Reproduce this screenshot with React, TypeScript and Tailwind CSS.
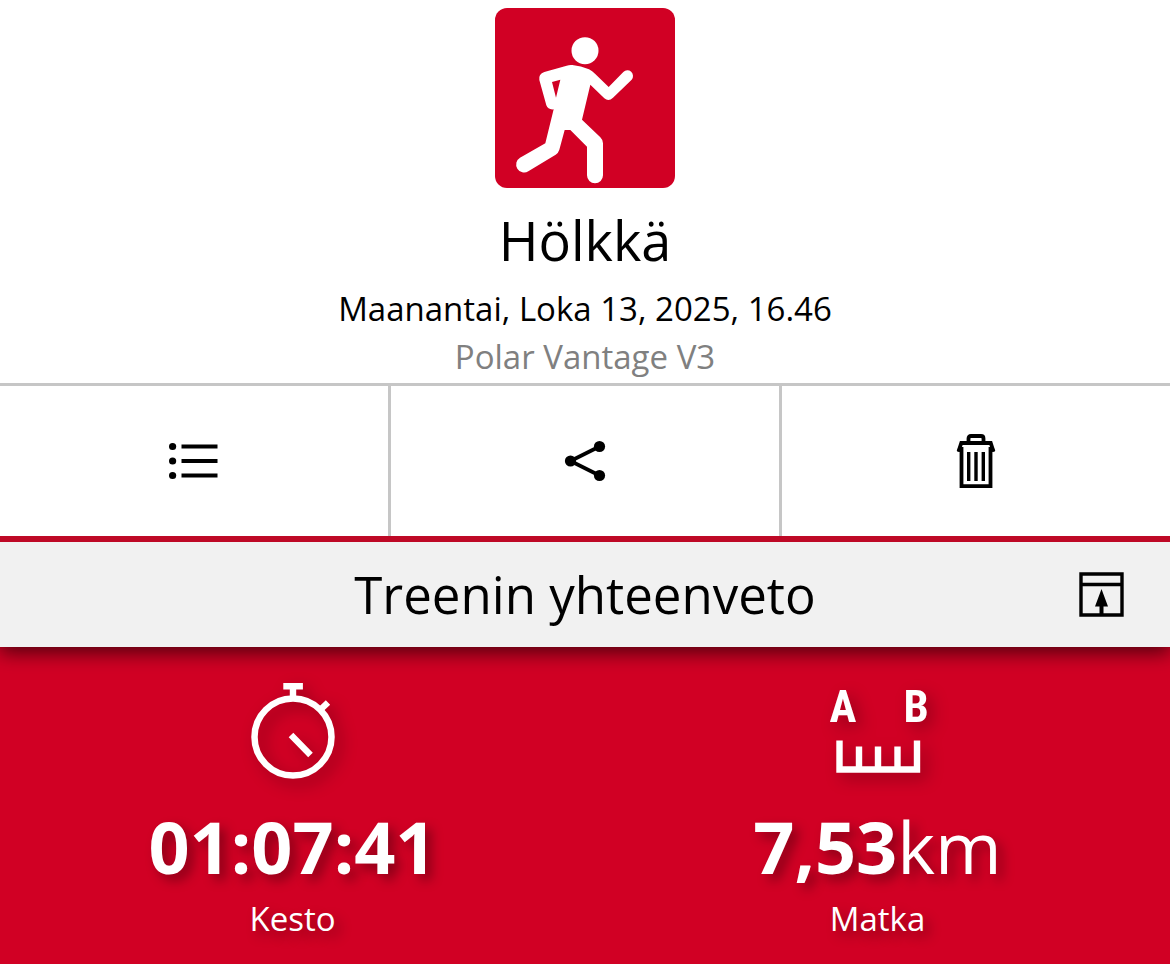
import React from 'react';

const RunnerLogo = () => (
  <svg viewBox="30 24 540 540" className="w-[180px] h-[180px]" role="img" aria-label="Hölkkä">
    <rect x="30" y="24" width="540" height="540" rx="36" fill="#d10024" />
    <circle cx="300" cy="152" r="40.500" fill="#fff" />
    <path
      fill="#fff"
      fillRule="evenodd"
      d="M262 195 Q288 197 312 208 Q322 213 330 221 L371 261 L415 216 A17 17 0 0 1 440 239 L384 293 Q371 306 358 295 L316 254 L291 359 L346 412 Q354 420 354 430 V526 A24 24 0 0 1 306 526 V440 L256 390 H239 L223 449 Q220 459 212 464 L130 514 A24 24 0 0 1 105 473 L181 430 L206 328 Q189 330 184 316 L163 240 Q160 222 178 216 L245 197 Q253 194 262 195 Z M201 246 L226 239 L213 293 Z"
    />
  </svg>
);

const ListIcon = () => (
  <svg viewBox="0 0 50 38" className="w-[50px] h-[38px]" aria-hidden="true">
    {[4.5, 19, 33.5].map((y) => (
      <g key={y}>
        <circle cx="3.600" cy={y} r="3.600" />
        <path d={`M12.500 ${y} H48.500`} stroke="#000" strokeWidth="3.800" />
      </g>
    ))}
  </svg>
);

const ShareIcon = () => (
  <svg viewBox="0 0 42 42" className="w-[42px] h-[42px]" aria-hidden="true">
    <path d="M35.500 6.500 L6.500 21 L35.500 35.500" fill="none" stroke="#000" strokeWidth="3.800" />
    <circle cx="6.500" cy="21" r="5.600" />
    <circle cx="35.500" cy="6.500" r="5.600" />
    <circle cx="35.500" cy="35.500" r="5.600" />
  </svg>
);

const TrashIcon = () => (
  <svg viewBox="0 0 40 56" className="w-10 h-14" fill="none" stroke="#000" strokeWidth="3.800" aria-hidden="true">
    <path d="M12.500 9 V5.500 Q12.500 3 15 3 H25 Q27.500 3 27.500 5.500 V9" />
    <path d="M1.500 17.200 H5.500 M34.500 17.200 H38.500" strokeWidth="3" />
    <path d="M2.500 18.500 L5.300 10 H34.700 L37.500 18.500" />
    <path d="M5.500 14 V53.200 H34.500 V14" />
    <path d="M12.700 19 V48 M20 19 V48 M27.300 19 V48" strokeWidth="3.400" />
  </svg>
);

const CollapseIcon = () => (
  <svg viewBox="0 0 45 45" className="w-[45px] h-[45px]" aria-hidden="true">
    <path d="M2 2 H43 V43 H2 Z M2 12.500 H43" fill="none" stroke="#000" strokeWidth="3.400" />
    <path d="M22.500 17 L29 34.500 H24.500 V43 H20.500 V34.500 H16 Z" />
  </svg>
);

const StopwatchIcon = () => (
  <svg
    viewBox="0 0 96 96"
    className="w-24 h-24 overflow-visible drop-shadow-[6px_6px_8px_rgba(0,0,0,0.3)]"
    fill="none"
    stroke="#fff"
    aria-hidden="true"
  >
    <circle cx="48" cy="54" r="38.500" strokeWidth="6.500" />
    <path d="M38.300 3.200 H57.900 M48 3 V15" strokeWidth="6.400" />
    <path d="M75 27 L83 19.500 M46 52 L65.500 72" strokeWidth="6.400" />
  </svg>
);

const DistanceIcon = () => (
  <svg
    viewBox="0 0 96 96"
    className="w-24 h-24 overflow-visible drop-shadow-[6px_6px_8px_rgba(0,0,0,0.3)] font-['Roboto_Condensed','Arial_Narrow',Roboto,sans-serif] font-bold text-[45px]"
    aria-hidden="true"
  >
    <g fill="#fff" textAnchor="middle">
      <text x="13" y="39">A</text>
      <text x="86" y="39">B</text>
    </g>
    <path
      d="M9.500 57.500 V86.500 H87 V57.500 M29 63.500 V86 M48 63.500 V86 M67.500 63.500 V86"
      fill="none"
      stroke="#fff"
      strokeWidth="6.400"
    />
  </svg>
);

const actions = [
  { label: 'Lista', icon: <ListIcon /> },
  { label: 'Jaa', icon: <ShareIcon /> },
  { label: 'Poista', icon: <TrashIcon /> },
];

const stats = [
  { label: 'Kesto', value: '01:07:41', unit: '', icon: <StopwatchIcon /> },
  { label: 'Matka', value: '7,53', unit: 'km', icon: <DistanceIcon /> },
];

export default function App() {
  return (
    <div className="min-h-screen flex flex-col bg-white text-black font-['Open_Sans','Noto_Sans',sans-serif]">
      {/* Training header */}
      <header className="flex flex-col items-center pt-2 pb-[2px] text-center">
        <RunnerLogo />
        <h1 className="mt-4 text-[54px] leading-[72px]">Hölkkä</h1>
        <p className="mt-[9px] text-[33px] leading-[48px]">Maanantai, Loka 13, 2025, 16.46</p>
        <p className="text-[33px] leading-[48px] text-[#808080]">Polar Vantage V3</p>
      </header>

      {/* Actions */}
      <div className="relative z-10 flex bg-white border-t-[3px] border-[#c6c6c6]">
        {actions.map(({ label, icon }) => (
          <button
            key={label}
            aria-label={label}
            className="flex-1 h-[150px] flex items-center justify-center border-r-[3px] border-[#c6c6c6] last:border-r-0"
          >
            {icon}
          </button>
        ))}
      </div>

      {/* Summary */}
      <main className="flex-1 flex flex-col bg-[#d10024]">
        <div className="grid grid-cols-[1fr_auto_1fr] items-center bg-[#f1f1f1] border-t-[6px] border-[#be0926] shadow-[0_6px_18px_rgba(0,0,0,0.6)]">
          <h2 className="col-start-2 text-[51px] leading-[105px]">Treenin yhteenveto</h2>
          <button aria-label="Pienennä" className="justify-self-end mr-[46px]">
            <CollapseIcon />
          </button>
        </div>

        <div className="grid grid-cols-2 pt-9 pb-5 text-white">
          {stats.map(({ label, value, unit, icon }) => (
            <section key={label} className="flex flex-col items-center">
              {icon}
              <p className="mt-[19px] text-[72px] leading-[96px] [text-shadow:6px_6px_12px_rgba(0,0,0,0.35)]">
                <span className="font-bold">{value}</span>
                {unit}
              </p>
              <h3 className="text-[33px] leading-[50px] [text-shadow:6px_6px_12px_rgba(0,0,0,0.35)]">{label}</h3>
            </section>
          ))}
        </div>
      </main>
    </div>
  );
}
